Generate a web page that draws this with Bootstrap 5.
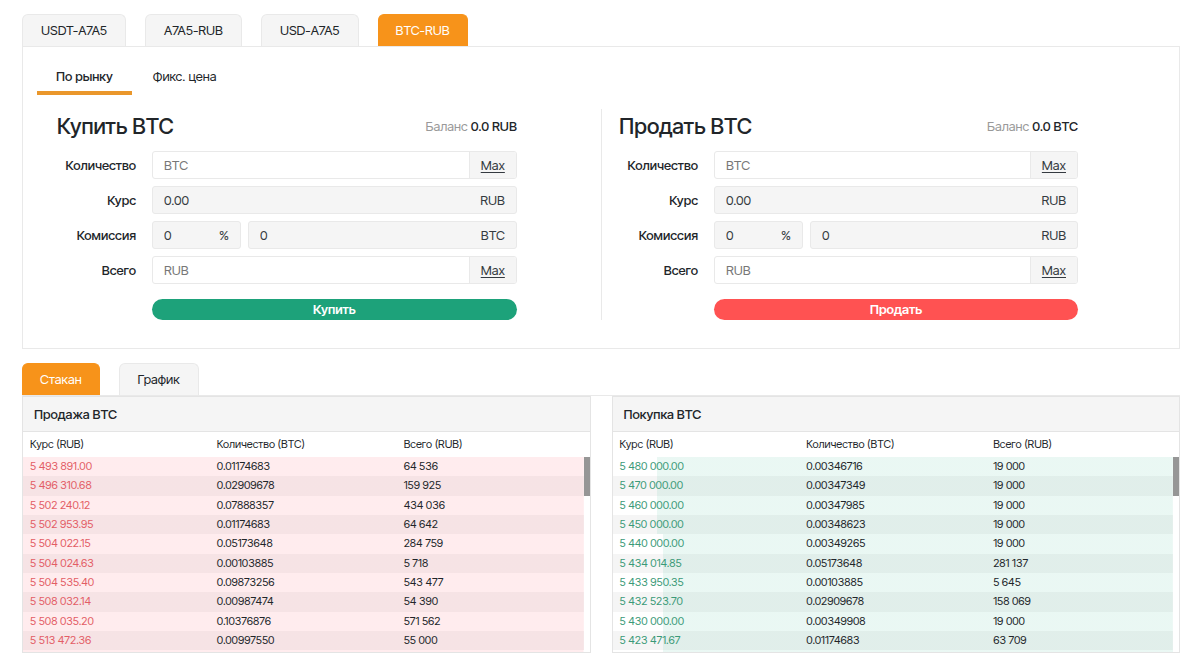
<!DOCTYPE html>
<html lang="ru">
<head>
<meta charset="utf-8">
<meta name="viewport" content="width=device-width, initial-scale=1">
<title>BTC-RUB</title>
<link href="https://cdn.jsdelivr.net/npm/bootstrap@5.3.0/dist/css/bootstrap.min.css" rel="stylesheet">
<style>
  :root { --line: #e9e9e9; --soft: #f5f5f5; --ink: #212529; --brand: #f7931a; }
  body { font-family: "Inter Tight", Inter, "Liberation Sans", sans-serif; font-size: 13px; line-height: 20px; color: var(--ink); background: #fff; }
  .page { padding: 14px 20px 12px 22px; }

  .tabs { gap: 19px; }
  .tabs .nav-link { padding: 5px 18px; border: 1px solid var(--line); border-bottom: 0; border-radius: 6px 6px 0 0; background: var(--soft); color: var(--ink); height: 32px; }
  .tabs .nav-link.active { background: var(--brand); border-color: var(--brand); color: #fff; padding: 5px 17px; }
  .panel { border: 1px solid var(--line); padding: 14px 14px 28px; }

  .modes { gap: 2px; }
  .modes .nav-link { padding: 5px 19px; border-bottom: 4px solid transparent; color: var(--ink); }
  .modes .nav-link.active { font-weight: 500; border-color: #ea972b; }

  .deal { padding: 0 3px; margin-top: 14px; }
  .deal-side { padding: 0 15% 0 17px; }
  .deal-half + .deal-half { border-left: 1px solid var(--line); }
  .deal h2 { font-size: 22px; line-height: 34px; font-weight: 500; }
  .balance { color: #999; }
  .balance b { color: var(--ink); font-weight: 500; }
  .rows { gap: 7px; margin-top: 8px; }
  .field-label { width: 79px; font-weight: 500; }
  .rows .line { gap: 16px; }
  .pair { gap: 7px; }
  .field { height: 28px; border: 1px solid var(--line); border-radius: 3px; overflow: hidden; background: #fff; }
  .field .form-control { border: 0; border-radius: 0; padding: 0 11px; font-size: 13px; height: 26px; min-height: 0; background: transparent; color: #343a40; }
  .field .form-control::placeholder { color: #777; opacity: 1; }
  .field.locked { background: var(--soft); }
  .field .unit { padding: 3px 11px 0 0; color: #343a40; }
  .field .max { border: 0; border-left: 1px solid var(--line); border-radius: 0; background: var(--soft); padding: 2px 11px 0; font-size: 13px; text-underline-offset: 2px; color: #343a40; }
  .fee { flex: 0 0 89px; }
  .go { height: 21px; border: 0; padding: 0; font-size: 13px; line-height: 21px; font-weight: 600; color: #fff; margin: 8px 0 0 95px; }
  .go-buy, .go-buy:hover { background: #1da27a; color: #fff; }
  .go-sell, .go-sell:hover { background: #ff5252; color: #fff; }

  .lower { margin-top: 14px; }
  .books { gap: 21px; border-top: 1px solid var(--line); }
  .book { border: 1px solid #e4e4e4; flex: 1 1 0; min-width: 0; }
  .book h3 { background: var(--soft); border-bottom: 1px solid #e4e4e4; font-size: 13px; line-height: 34px; font-weight: 500; padding: 0 11px; }
  .orders { table-layout: fixed; font-size: 11px; line-height: 19px; --bs-table-bg: transparent; color: var(--ink); }
  .orders th, .orders td { padding: 0 7px; font-weight: 400; width: 33%; }
  .orders th { line-height: 25px; }
  .orders tbody tr { height: 19px; background-color: #fff; background-image: linear-gradient(var(--tint), var(--tint)); background-size: var(--depth, 100%) 100%; background-position: right; background-repeat: no-repeat; }
  .orders tbody tr:nth-child(even) { background-color: var(--soft); }
  .orders tbody tr:nth-child(3n+2) { height: 20px; }
  .orders tbody tr:last-child, .orders tbody tr:last-child td { height: 2px; line-height: 0; }
  .asks { --tint: #ff52631c; --price: #e35d65; }
  .bids { --tint: #1fb08418; --price: #3b9a78; }
  .orders tbody td:first-child { color: var(--price); }
  .track { flex: 0 0 6px; padding-top: 25px; }
  .thumb { height: 39px; background: #969696; }
</style>
</head>
<body>
<main class="page">
  <nav class="nav tabs" aria-label="Пары">
    <a class="nav-link" href="#">USDT-A7A5</a>
    <a class="nav-link" href="#">A7A5-RUB</a>
    <a class="nav-link" href="#">USD-A7A5</a>
    <a class="nav-link active" href="#" aria-current="page">BTC-RUB</a>
  </nav>

  <section class="panel">
    <nav class="nav modes" aria-label="Тип сделки">
      <a class="nav-link active" href="#">По рынку</a>
      <a class="nav-link" href="#">Фикс. цена</a>
    </nav>

    <div class="deal">
      <div class="row g-0">
        <div class="col-6 deal-half">
          <form class="deal-side">
            <div class="d-flex justify-content-between align-items-center">
              <h2 class="mb-0">Купить BTC</h2>
              <div class="balance">Баланс <b>0.0 RUB</b></div>
            </div>
            <div class="rows d-flex flex-column">
              <div class="line d-flex align-items-center">
                <label class="field-label text-end" for="buy-amount">Количество</label>
                <div class="field d-flex flex-grow-1"><input class="form-control" id="buy-amount" placeholder="BTC"><button type="button" class="btn max text-decoration-underline">Max</button></div>
              </div>
              <div class="line d-flex align-items-center">
                <label class="field-label text-end" for="buy-rate">Курс</label>
                <div class="field locked d-flex flex-grow-1"><input class="form-control" id="buy-rate" value="0.00" readonly><span class="unit">RUB</span></div>
              </div>
              <div class="line d-flex align-items-center">
                <label class="field-label text-end" for="buy-fee">Комиссия</label>
                <div class="pair d-flex flex-grow-1">
                  <div class="field locked fee d-flex"><input class="form-control" id="buy-fee" value="0" readonly><span class="unit">%</span></div>
                  <div class="field locked d-flex flex-grow-1"><input class="form-control" aria-label="Комиссия BTC" value="0" readonly><span class="unit">BTC</span></div>
                </div>
              </div>
              <div class="line d-flex align-items-center">
                <label class="field-label text-end" for="buy-total">Всего</label>
                <div class="field d-flex flex-grow-1"><input class="form-control" id="buy-total" placeholder="RUB"><button type="button" class="btn max text-decoration-underline">Max</button></div>
              </div>
              <button type="button" class="btn rounded-pill go go-buy">Купить</button>
            </div>
          </form>
        </div>
        <div class="col-6 deal-half">
          <form class="deal-side">
            <div class="d-flex justify-content-between align-items-center">
              <h2 class="mb-0">Продать BTC</h2>
              <div class="balance">Баланс <b>0.0 BTC</b></div>
            </div>
            <div class="rows d-flex flex-column">
              <div class="line d-flex align-items-center">
                <label class="field-label text-end" for="sell-amount">Количество</label>
                <div class="field d-flex flex-grow-1"><input class="form-control" id="sell-amount" placeholder="BTC"><button type="button" class="btn max text-decoration-underline">Max</button></div>
              </div>
              <div class="line d-flex align-items-center">
                <label class="field-label text-end" for="sell-rate">Курс</label>
                <div class="field locked d-flex flex-grow-1"><input class="form-control" id="sell-rate" value="0.00" readonly><span class="unit">RUB</span></div>
              </div>
              <div class="line d-flex align-items-center">
                <label class="field-label text-end" for="sell-fee">Комиссия</label>
                <div class="pair d-flex flex-grow-1">
                  <div class="field locked fee d-flex"><input class="form-control" id="sell-fee" value="0" readonly><span class="unit">%</span></div>
                  <div class="field locked d-flex flex-grow-1"><input class="form-control" aria-label="Комиссия RUB" value="0" readonly><span class="unit">RUB</span></div>
                </div>
              </div>
              <div class="line d-flex align-items-center">
                <label class="field-label text-end" for="sell-total">Всего</label>
                <div class="field d-flex flex-grow-1"><input class="form-control" id="sell-total" placeholder="RUB"><button type="button" class="btn max text-decoration-underline">Max</button></div>
              </div>
              <button type="button" class="btn rounded-pill go go-sell">Продать</button>
            </div>
          </form>
        </div>
      </div>
    </div>
  </section>

  <nav class="nav tabs lower" aria-label="Вид">
    <a class="nav-link active" href="#" aria-current="page">Стакан</a>
    <a class="nav-link" href="#">График</a>
  </nav>
  <div class="books d-flex">
    <section class="book asks">
      <h3 class="mb-0">Продажа BTC</h3>
      <div class="d-flex">
        <table class="table table-borderless mb-0 orders">
          <thead><tr><th>Курс (RUB)</th><th>Количество (BTC)</th><th>Всего (RUB)</th></tr></thead>
          <tbody>
            <tr><td>5 493 891.00</td><td>0.01174683</td><td>64 536</td></tr>
            <tr><td>5 496 310.68</td><td>0.02909678</td><td>159 925</td></tr>
            <tr><td>5 502 240.12</td><td>0.07888357</td><td>434 036</td></tr>
            <tr><td>5 502 953.95</td><td>0.01174683</td><td>64 642</td></tr>
            <tr><td>5 504 022.15</td><td>0.05173648</td><td>284 759</td></tr>
            <tr><td>5 504 024.63</td><td>0.00103885</td><td>5 718</td></tr>
            <tr><td>5 504 535.40</td><td>0.09873256</td><td>543 477</td></tr>
            <tr><td>5 508 032.14</td><td>0.00987474</td><td>54 390</td></tr>
            <tr><td>5 508 035.20</td><td>0.10376876</td><td>571 562</td></tr>
            <tr><td>5 513 472.36</td><td>0.00997550</td><td>55 000</td></tr>
            <tr><td colspan="3"></td></tr>
          </tbody>
        </table>
        <div class="track"><div class="thumb"></div></div>
      </div>
    </section>
    <section class="book bids">
      <h3 class="mb-0">Покупка BTC</h3>
      <div class="d-flex">
        <table class="table table-borderless mb-0 orders">
          <thead><tr><th>Курс (RUB)</th><th>Количество (BTC)</th><th>Всего (RUB)</th></tr></thead>
          <tbody>
            <tr style="--depth:92%"><td>5 480 000.00</td><td>0.00346716</td><td>19 000</td></tr>
            <tr style="--depth:92%"><td>5 470 000.00</td><td>0.00347349</td><td>19 000</td></tr>
            <tr style="--depth:92%"><td>5 460 000.00</td><td>0.00347985</td><td>19 000</td></tr>
            <tr style="--depth:92%"><td>5 450 000.00</td><td>0.00348623</td><td>19 000</td></tr>
            <tr style="--depth:91%"><td>5 440 000.00</td><td>0.00349265</td><td>19 000</td></tr>
            <tr style="--depth:91%"><td>5 434 014.85</td><td>0.05173648</td><td>281 137</td></tr>
            <tr style="--depth:91%"><td>5 433 950.35</td><td>0.00103885</td><td>5 645</td></tr>
            <tr style="--depth:91%"><td>5 432 523.70</td><td>0.02909678</td><td>158 069</td></tr>
            <tr style="--depth:91%"><td>5 430 000.00</td><td>0.00349908</td><td>19 000</td></tr>
            <tr style="--depth:91%"><td>5 423 471.67</td><td>0.01174683</td><td>63 709</td></tr>
            <tr style="--depth:91%"><td colspan="3"></td></tr>
          </tbody>
        </table>
        <div class="track"><div class="thumb"></div></div>
      </div>
    </section>
  </div>
</main>
<script src="https://cdn.jsdelivr.net/npm/bootstrap@5.3.0/dist/js/bootstrap.bundle.min.js"></script>
</body>
</html>
